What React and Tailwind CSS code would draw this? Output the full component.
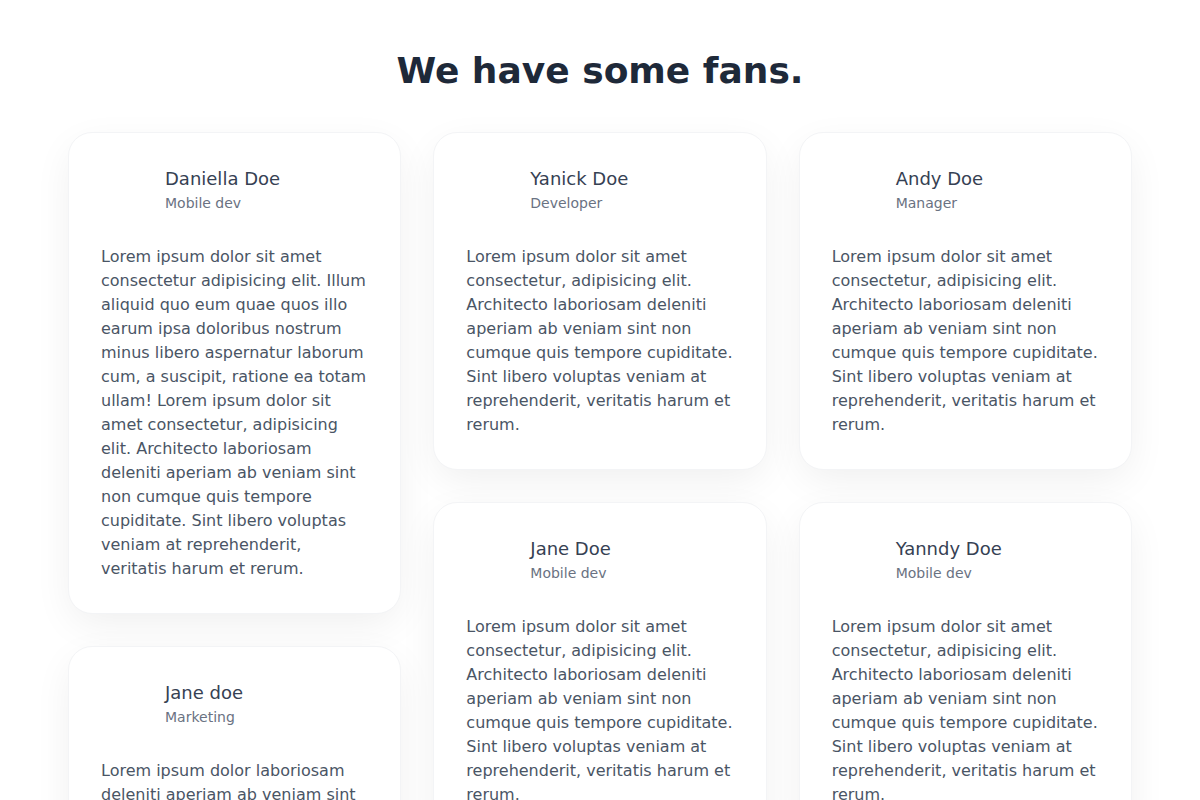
const testimonials = [
    [
        {
            name: 'Daniella Doe',
            role: 'Mobile dev',
            text: 'Lorem ipsum dolor sit amet consectetur adipisicing elit. Illum aliquid quo eum quae quos illo earum ipsa doloribus nostrum minus libero aspernatur laborum cum, a suscipit, ratione ea totam ullam! Lorem ipsum dolor sit amet consectetur, adipisicing elit. Architecto laboriosam deleniti aperiam ab veniam sint non cumque quis tempore cupiditate. Sint libero voluptas veniam at reprehenderit, veritatis harum et rerum.',
        },
        {
            name: 'Jane doe',
            role: 'Marketing',
            text: 'Lorem ipsum dolor laboriosam deleniti aperiam ab veniam sint non cumque quis tempore cupiditate. Sint libero voluptas veniam at reprehenderit, veritatis harum et rerum.',
        },
    ],
    [
        {
            name: 'Yanick Doe',
            role: 'Developer',
            text: 'Lorem ipsum dolor sit amet consectetur, adipisicing elit. Architecto laboriosam deleniti aperiam ab veniam sint non cumque quis tempore cupiditate. Sint libero voluptas veniam at reprehenderit, veritatis harum et rerum.',
        },
        {
            name: 'Jane Doe',
            role: 'Mobile dev',
            text: 'Lorem ipsum dolor sit amet consectetur, adipisicing elit. Architecto laboriosam deleniti aperiam ab veniam sint non cumque quis tempore cupiditate. Sint libero voluptas veniam at reprehenderit, veritatis harum et rerum.',
        },
    ],
    [
        {
            name: 'Andy Doe',
            role: 'Manager',
            text: 'Lorem ipsum dolor sit amet consectetur, adipisicing elit. Architecto laboriosam deleniti aperiam ab veniam sint non cumque quis tempore cupiditate. Sint libero voluptas veniam at reprehenderit, veritatis harum et rerum.',
        },
        {
            name: 'Yanndy Doe',
            role: 'Mobile dev',
            text: 'Lorem ipsum dolor sit amet consectetur, adipisicing elit. Architecto laboriosam deleniti aperiam ab veniam sint non cumque quis tempore cupiditate. Sint libero voluptas veniam at reprehenderit, veritatis harum et rerum.',
        },
    ],
];

const FanCard = ({ fan }) => (
    <div className="p-8 bg-white border border-gray-100 rounded-3xl shadow-[0_12px_40px_-4px_rgba(0,0,0,0.07)]">
        <div className="flex gap-4">
            <div className="w-12 h-12 rounded-full shrink-0" />
            <div>
                <h6 className="text-lg font-medium text-gray-700">{fan.name}</h6>
                <p className="text-sm text-gray-500">{fan.role}</p>
            </div>
        </div>
        <p className="mt-8 text-base text-gray-600">{fan.text}</p>
    </div>
);

const App = () => {
    return (
        <div className="min-h-screen bg-white text-gray-600 font-['DejaVu_Sans',sans-serif]">
            <div className="px-[68px] pt-[51px]">
                <h2 className="text-4xl font-bold text-gray-800 text-center">We have some fans.</h2>
                <div className="mt-[41px] grid grid-cols-3 gap-8 items-start">
                    {testimonials.map((col, i) => (
                        <div key={i} className="flex flex-col gap-8">
                            {col.map((fan) => (
                                <FanCard key={fan.name} fan={fan} />
                            ))}
                        </div>
                    ))}
                </div>
            </div>
        </div>
    );
};

export default App;
